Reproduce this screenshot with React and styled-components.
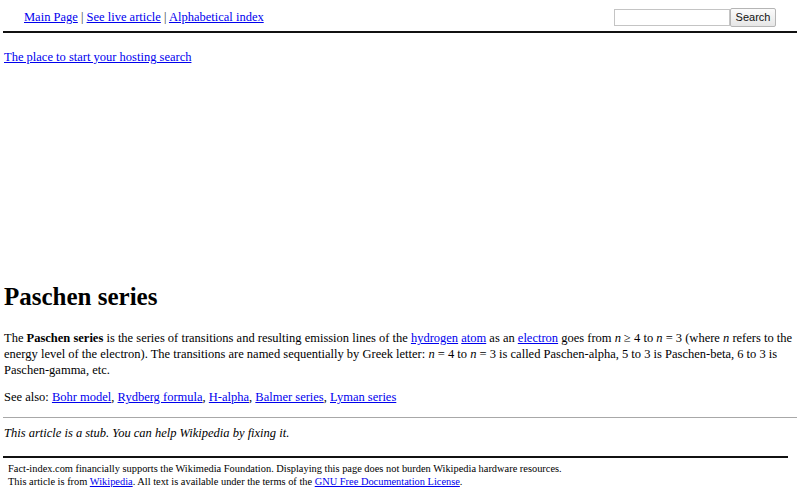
import React from "react";
import styled, { createGlobalStyle } from "styled-components";

const Global = createGlobalStyle`
  html, body { margin: 0; padding: 0; background: #fff; }
  body {
    font-family: "Liberation Serif", "Times New Roman", serif;
    font-size: 12.5px;
    color: #000;
  }
  a { color: #0000ee; }
`;

const Page = styled.div`
  padding: 0 3px;
  width: 794px;
`;

const TopBar = styled.div`
  display: flex;
  align-items: center;
  justify-content: space-between;
  height: 28px;
  margin-top: 3px;
  padding: 0 21px 0 21px;
`;

const NavLinks = styled.div`
  font-size: 12.5px;
  line-height: 16px;
  color: #000;
`;

const Sep = styled.span`
  color: #333;
`;

const SearchForm = styled.form`
  display: flex;
  align-items: center;
  margin: 0;
`;

const SearchInput = styled.input`
  box-sizing: border-box;
  width: 116px;
  height: 17px;
  border: 1px solid #c4c4c4;
  padding: 0 2px;
  margin: 0;
  outline: none;
`;

const SearchButton = styled.button`
  box-sizing: border-box;
  height: 19px;
  width: 46px;
  margin: 0;
  padding: 0;
  font-family: "Liberation Sans", Arial, sans-serif;
  font-size: 11px;
  color: #111;
  background: linear-gradient(#fbfbfb, #e6e6e6);
  border: 1px solid #b5b5b5;
  border-radius: 2px;
`;

const ThickRule = styled.div`
  height: 2px;
  background: #111;
`;

const PromoLine = styled.div`
  margin-top: 16px;
  line-height: 16px;
  padding-left: 1px;
`;

const AdSpace = styled.div`
  height: 218px;
`;

const Title = styled.h1`
  margin: 0 0 0 1px;
  font-size: 25px;
  line-height: 28px;
  font-weight: bold;
`;

const Paragraph = styled.p`
  margin: ${(p) => p.$top || 0}px 0 0 1px;
  line-height: 16px;
  font-size: 12.5px;
`;

const ThinRule = styled.div`
  height: 1px;
  background: #a8a8a8;
  margin-top: 12px;
`;

const Stub = styled.p`
  margin: 7px 0 0 1px;
  font-style: italic;
  line-height: 16px;
`;

const Footer = styled.div`
  margin-top: 15px;
  margin-right: 9px;
`;

const FooterText = styled.div`
  padding-left: 5px;
  padding-top: 4px;
  font-size: 10.4px;
  line-height: 13px;
`;

export default function App() {
  return (
    <>
      <Global />
      <Page>
        <TopBar>
          <NavLinks>
            <a href="#">Main Page</a> <Sep>|</Sep> <a href="#">See live article</a>{" "}
            <Sep>|</Sep> <a href="#">Alphabetical index</a>
          </NavLinks>
          <SearchForm onSubmit={(e) => e.preventDefault()}>
            <SearchInput type="text" />
            <SearchButton type="submit">Search</SearchButton>
          </SearchForm>
        </TopBar>
        <ThickRule />
        <PromoLine>
          <a href="#">The place to start your hosting search</a>
        </PromoLine>
        <AdSpace />
        <Title>Paschen series</Title>
        <Paragraph $top={19}>
          The <b>Paschen series</b> is the series of transitions and resulting emission lines of the{" "}
          <a href="#">hydrogen</a> <a href="#">atom</a> as an <a href="#">electron</a> goes from{" "}
          <i>n</i> ≥ 4 to <i>n</i> = 3 (where <i>n</i> refers to the energy level of the electron).
          The transitions are named sequentially by Greek letter: <i>n</i> = 4 to <i>n</i> = 3 is
          called Paschen-alpha, 5 to 3 is Paschen-beta, 6 to 3 is Paschen-gamma, etc.
        </Paragraph>
        <Paragraph $top={11}>
          See also: <a href="#">Bohr model</a>, <a href="#">Rydberg formula</a>,{" "}
          <a href="#">H-alpha</a>, <a href="#">Balmer series</a>, <a href="#">Lyman series</a>
        </Paragraph>
        <ThinRule />
        <Stub>This article is a stub. You can help Wikipedia by fixing it.</Stub>
        <Footer>
          <ThickRule />
          <FooterText>
            Fact-index.com financially supports the Wikimedia Foundation. Displaying this page does
            not burden Wikipedia hardware resources.
            <br />
            This article is from <a href="#">Wikipedia</a>. All text is available under the terms of
            the <a href="#">GNU Free Documentation License</a>.
          </FooterText>
        </Footer>
      </Page>
    </>
  );
}
